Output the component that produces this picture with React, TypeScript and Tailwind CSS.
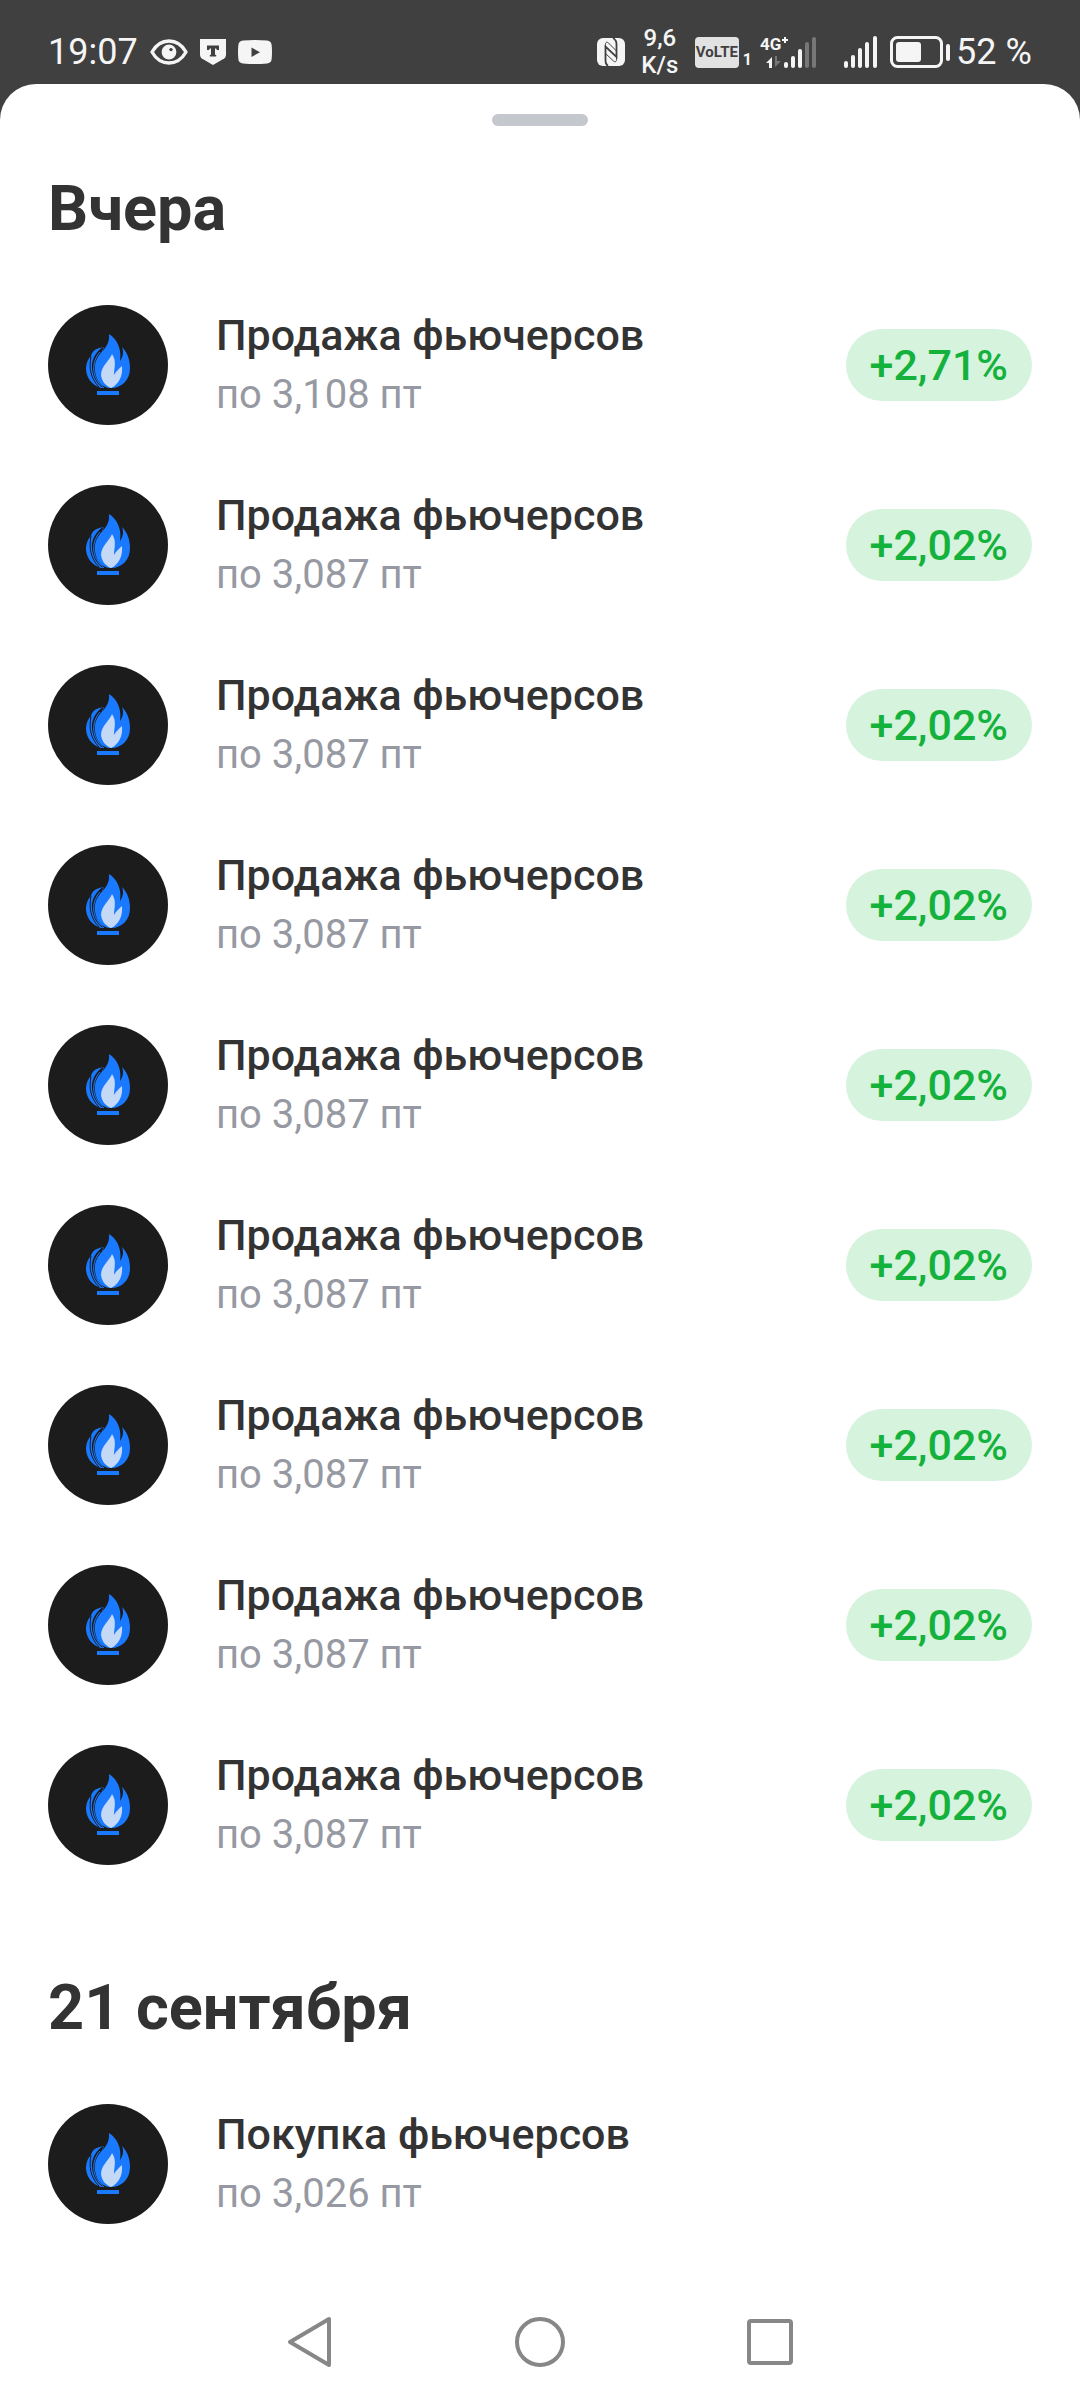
import React from "react";

// --- TYPES ---
interface Operation {
    title: string;
    price: string;
    change?: string;
}

interface Day {
    label: string;
    operations: Operation[];
}

const sale: Operation = { title: "Продажа фьючерсов", price: "по 3,087 пт", change: "+2,02%" };

const days: Day[] = [
    {
        label: "Вчера",
        operations: [
            { title: "Продажа фьючерсов", price: "по 3,108 пт", change: "+2,71%" },
            ...Array.from({ length: 8 }, () => sale),
        ],
    },
    {
        label: "21 сентября",
        operations: [{ title: "Покупка фьючерсов", price: "по 3,026 пт" }],
    },
];

// --- STATUS BAR ICONS ---
const EyeIcon = () => (
    <svg className="h-[26px] w-[38px]" viewBox="0 0 38 26" fill="none" aria-hidden="true">
        <path d="M2 13C6 6 12 2 19 2s13 4 17 11c-4 7-10 11-17 11S6 20 2 13Z" stroke="#f5f5f5" strokeWidth="3.4" strokeLinejoin="round" />
        <circle cx="19" cy="13" r="7.4" fill="#f5f5f5" />
        <circle cx="21" cy="10.6" r="1.7" fill="#404040" />
    </svg>
);

const ShieldIcon = () => (
    <svg className="h-[26px] w-[26px]" viewBox="0 0 26 26" aria-hidden="true">
        <path d="M0 0h26v15.500c0 2-1 3.600-2.700 4.600L13 26 2.700 20.100C1 19.100 0 17.500 0 15.500Z" fill="#f5f5f5" />
        <path d="M7 6.500h12v4.500h-2.200c-.2-1-.6-1.400-1.300-1.400h-.5v5.200c0 .8.3 1.200 1.200 1.200v1.400H9.800V16c.9 0 1.200-.4 1.200-1.200V9.600h-.5c-.7 0-1.100.4-1.300 1.400H7Z" fill="#404040" />
    </svg>
);

const VideoIcon = () => (
    <svg className="h-[24px] w-[34px]" viewBox="0 0 34 24" aria-hidden="true">
        <path d="M5 .5Q17-.5 29 .5q4.500.4 4.700 5 .6 6.500 0 13-.2 4.600-4.700 5-12 1-24 0-4.500-.4-4.700-5-.6-6.500 0-13Q.5.900 5 .5Z" fill="#f5f5f5" />
        <path d="M13.500 7.500v9.500l8.500-4.800Z" fill="#404040" />
    </svg>
);

const NfcIcon = () => (
    <svg className="h-[28px] w-[28px]" viewBox="0 0 28 28" aria-hidden="true">
        <rect width="28" height="28" rx="6" fill="#f5f5f5" />
        <path d="M11 28C9 26.500 8.500 25 8.500 23V8.500L19.500 19V6C19.500 3 18.500 1.500 16 0" fill="none" stroke="#404040" strokeWidth="1.800" />
        <path d="M8.500 8.500V6.500C8.500 4 10 3.700 11.500 5L19.500 13M19.500 19v2.500c0 2.500-1.500 2.800-3 1.500L8.500 15.500" fill="none" stroke="#404040" strokeWidth="1" />
    </svg>
);

const DataSignalIcon = () => (
    <svg className="h-[32px] w-[56px] overflow-visible" viewBox="0 0 56 32" aria-hidden="true">
        <text x="0" y="14" fontFamily="Roboto, sans-serif" fontSize="17" fontWeight="700" fill="#f5f5f5">4G</text>
        <path d="M22 4h6M25 1v6" stroke="#f5f5f5" strokeWidth="2" />
        <path d="M6 27l6-6v11H9v-5Z" fill="#f5f5f5" />
        <path d="M15 20v11l6-6h-4v-5Z" fill="#777" />
        <rect x="24" y="26" width="4" height="6" rx="2" fill="#f5f5f5" />
        <rect x="31" y="20" width="4" height="12" rx="2" fill="#f5f5f5" />
        <rect x="38" y="13" width="4" height="19" rx="2" fill="#f5f5f5" />
        <rect x="45" y="6" width="4" height="26" rx="2" fill="#777" />
        <rect x="52" y="1" width="4" height="31" rx="2" fill="#777" />
    </svg>
);

const SignalIcon = () => (
    <svg className="h-[32px] w-[34px]" viewBox="0 0 34 32" fill="#f5f5f5" aria-hidden="true">
        <rect x="0" y="25" width="4" height="7" rx="2" />
        <rect x="7" y="19" width="4" height="13" rx="2" />
        <rect x="14" y="12" width="4" height="20" rx="2" />
        <rect x="21" y="6" width="4" height="26" rx="2" />
        <rect x="29" y="0" width="4" height="32" rx="2" />
    </svg>
);

const BatteryIcon = () => (
    <svg className="h-[32px] w-[60px]" viewBox="0 0 60 32" aria-hidden="true">
        <rect x="1.500" y="1.500" width="50" height="29" rx="6" fill="none" stroke="#f5f5f5" strokeWidth="3" />
        <rect x="6" y="6" width="25" height="20" rx="3" fill="#f5f5f5" />
        <rect x="56" y="8" width="4" height="17" rx="2" fill="#f5f5f5" />
    </svg>
);

const StatusBar = () => (
    <header className="flex h-[84px] items-center justify-between pt-5 pr-[42px] pl-12 text-[36px] leading-none text-[#f5f5f5]">
        <div className="flex items-center gap-3">
            <span>19:07</span>
            <EyeIcon />
            <ShieldIcon />
            <VideoIcon />
        </div>
        <div className="flex items-center">
            <NfcIcon />
            <span className="ml-4 w-[38px] text-center text-[24px] leading-[27px] font-medium">9,6 K/s</span>
            <span className="ml-4 flex items-end gap-1">
                <span className="flex h-[31px] w-[44px] items-center justify-center rounded bg-[#e2e2e2] text-[15px] font-bold text-[#404040]">VoLTE</span>
                <span className="text-[16px] leading-4 font-bold">1</span>
            </span>
            <span className="ml-2"><DataSignalIcon /></span>
            <span className="ml-7"><SignalIcon /></span>
            <span className="ml-3"><BatteryIcon /></span>
            <span className="w-[88px] text-center">52 %</span>
        </div>
    </header>
);

// --- OPERATIONS ---
const FlameLogo = () => (
    <svg className="h-[120px] w-[120px] shrink-0" viewBox="0 0 120 120" aria-hidden="true">
        <circle cx="60" cy="60" r="60" fill="#1c1c1c" />
        <path d="M56 42C48 43 44 46 43 51C39 55 38 60 38 65C39 74 44 80 53 83H60L50 60Z" fill="#1a7aff" />
        <path d="M43 51C41 62 42 73 51 82" fill="none" stroke="#1c1c1c" strokeWidth="1" />
        <path d="M56 41C45 49 42 58 45 69C47 76 51 81 57 84L62 80L53 49Z" fill="#1c1c1c" />
        <path d="M52 47C43 57 43 73 56 83" fill="none" stroke="#1a7aff" strokeWidth="1" />
        <path d="M61 29C62 38 57 44 52 49C46 56 46 64 48 71C50 78 55 83 63 83C74 83 82 75 82 63C82 54 79 47 74 42C76 47 75 52 72 56C74 44 69 34 61 29Z" fill="#1a7aff" />
        <path d="M64 49C62 55 53 61 53 70C54 77 58 81 63 83C70 80 75 72 74 61C71 64 68 66 66 70C66 63 69 56 64 49Z" fill="#c3d9f5" />
        <rect x="49" y="86" width="22" height="4" fill="#1a7aff" />
    </svg>
);

const OperationRow = ({ title, price, change }: Operation) => (
    <li className="flex items-center py-[30px]">
        <FlameLogo />
        <div className="ml-12 flex-1">
            <p className="text-[43px] leading-[60px] font-medium text-[#333333]">{title}</p>
            <p className="text-[40px] leading-[60px] text-[#9699a2]">{price}</p>
        </div>
        {change && (
            <span className="flex h-[72px] items-center rounded-full bg-[#d6f3de] px-6 text-[43px] font-medium text-[#14b23c]">
                {change}
            </span>
        )}
    </li>
);

// --- SYSTEM NAVIGATION ---
const NavBar = () => (
    <nav className="mx-auto mt-[60px] grid w-[70%] grid-cols-3 justify-items-center">
        <button type="button" aria-label="Назад">
            <svg className="size-14" viewBox="0 0 56 56" fill="none" stroke="#878787" strokeWidth="4" strokeLinejoin="round">
                <path d="M8 28 47 5v46Z" />
            </svg>
        </button>
        <button type="button" aria-label="Домой">
            <svg className="size-14" viewBox="0 0 56 56" fill="none" stroke="#878787" strokeWidth="4">
                <circle cx="28" cy="28" r="23" />
            </svg>
        </button>
        <button type="button" aria-label="Недавние">
            <svg className="size-14" viewBox="0 0 56 56" fill="none" stroke="#878787" strokeWidth="4">
                <rect x="7" y="7" width="42" height="42" rx="2" />
            </svg>
        </button>
    </nav>
);

export default function App() {
    return (
        <div className="min-h-screen bg-[#404040] font-['Roboto',sans-serif]">
            <StatusBar />
            <main className="min-h-[calc(100vh-84px)] rounded-t-[36px] bg-white px-12 pt-[30px] pb-6">
                <div className="mx-auto h-3 w-24 rounded-full bg-[#c4c7ce]" />
                {days.map((day, i) => (
                    <section key={day.label} className={i === 0 ? "pt-[45px]" : "pt-[75px]"}>
                        <h2 className="text-[63px] leading-[76px] font-bold text-[#333333]">{day.label}</h2>
                        <ul className="pt-7">
                            {day.operations.map((operation, n) => (
                                <OperationRow key={n} {...operation} />
                            ))}
                        </ul>
                    </section>
                ))}
                <NavBar />
            </main>
        </div>
    );
}
